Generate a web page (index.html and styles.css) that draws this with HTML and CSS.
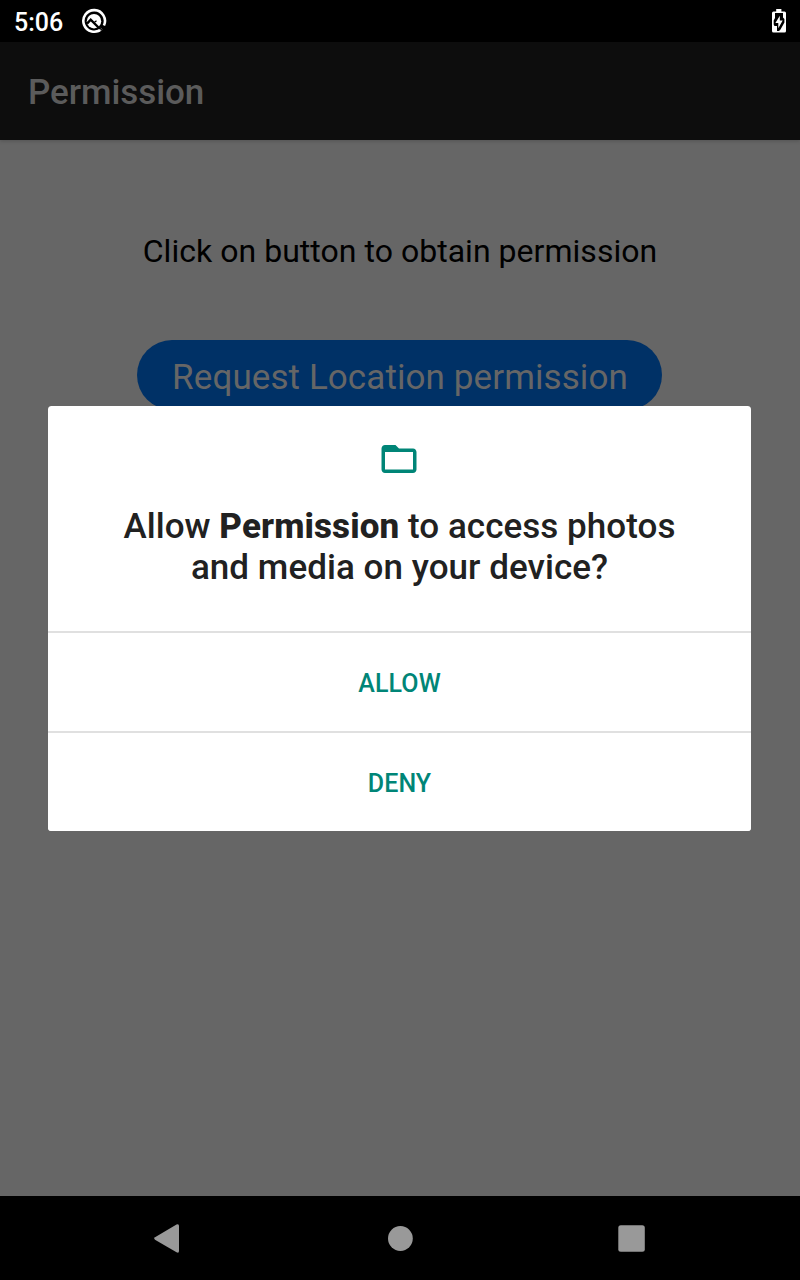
FILE: index.html
```html
<!DOCTYPE html>
<html lang="en">
<head>
<meta charset="utf-8">
<title>Permission</title>
<link rel="stylesheet" href="styles.css">
</head>
<body>
<div class="screen">
  <header class="status">
    <span class="time">5:06</span>
    <svg class="status-app" width="26" height="26" viewBox="0 0 26 26">
      <path d="M20 21.300A10.800 10.800 0 1 1 22.600 18.200" transform="rotate(-4 13 13)" fill="none" stroke="#fff" stroke-width="2.600"/>
      <circle cx="13" cy="13.200" r="7.200" fill="#fff"/>
      <path d="M6 15.600l3.700-3.900 10.800 10.800" fill="none" stroke="#000" stroke-width="2.400"/>
      <path d="M13.500 14.200l2-1.400" stroke="#000" stroke-width="1.400"/>
      <path d="M16.500 23.300l3-1.400" stroke="#fff" stroke-width="2"/>
    </svg>
    <svg class="battery" width="14" height="24" viewBox="0 0 14 24">
      <path d="M4.200 0h5.200v2.500h3.100Q14 2.500 14 4v18Q14 23.500 12.500 23.500h-11Q0 23.500 0 22V4Q0 2.500 1.500 2.500h2.700z" fill="#fff"/>
      <path d="M3 4H11V8.500L12.400 10V13.500L8.500 20.500L7 22H5V17H2.500L1.700 15.500V11.500L3 9z" fill="#000"/>
      <path d="M7.800 6.800L3.400 14H6.300V19.200L10.700 11.600H7.800z" fill="#fff"/>
    </svg>
  </header>
  <div class="appbar"><h1 class="title">Permission</h1></div>
  <main class="content">
    <p class="hint">Click on button to obtain permission</p>
    <button class="request">Request Location permission</button>
  </main>
  <nav class="nav">
    <svg class="nav-icons" width="800" height="84" viewBox="0 0 800 84" fill="#999">
      <path d="M155 41.300L176.500 28.600Q179 27.500 179 30V55Q179 57.500 176.500 56.200L155 43.700Q153.200 42.500 155 41.300z"/>
      <circle cx="400.400" cy="42.500" r="12.400"/>
      <rect x="618.300" y="29.300" width="26.500" height="26.500" rx="2.500"/>
    </svg>
  </nav>
  <section class="dialog" role="dialog">
    <div class="message">
      <svg class="folder" width="43" height="42" viewBox="0 0 24.570 24">
        <path d="M20 6h-8l-2-2H4c-1.100 0-1.990.900-1.990 2L2 18c0 1.100.900 2 2 2h16c1.100 0 2-.900 2-2V8c0-1.100-.900-2-2-2zm0 12H4V8h16v10z" fill="#008577"/>
      </svg>
      <p class="question">Allow <b>Permission</b> to access photos<br>and media on your device?</p>
    </div>
    <button class="choice">ALLOW</button>
    <button class="choice">DENY</button>
  </section>
</div>
</body>
</html>
```
FILE: styles.css
```css
* { box-sizing: border-box; }
body { margin: 0; font-family: Roboto, sans-serif; background: #666; }
.screen { position: relative; display: flex; flex-direction: column; height: 1280px; width: 800px; overflow: hidden; }
.status { display: flex; align-items: flex-start; height: 42px; padding: 8px 14px 0; background: #000; color: #fff; }
.time { font-size: 25px; font-weight: 500; line-height: 29px; width: 67px; }
.battery { margin: 1px 0 0 auto; }
.appbar { display: flex; align-items: center; height: 98px; padding: 2px 28px 0; background: #0d0d0d; box-shadow: 0 1px 4px rgba(0, 0, 0, .2); }
.title { margin: 0; font-size: 35px; font-weight: 500; letter-spacing: -.07px; color: #5b5b5b; }
.content { display: flex; flex: 1; flex-direction: column; align-items: center; padding-top: 91px; }
.hint { margin: 0 0 69px; font-size: 32px; line-height: 40px; letter-spacing: .03px; color: #000; }
.request { width: 525px; height: 70px; margin-right: 1px; padding: 4px 0 0 1px; border: 0; border-radius: 35px; background: #003166; color: #666; font: 400 35px Roboto, sans-serif; letter-spacing: .09px; }
.nav { height: 84px; background: #000; }
.nav-icons { display: block; }
.dialog { position: absolute; left: 48px; top: 406px; display: flex; flex-direction: column; width: 703px; height: 425px; border-radius: 3.5px; background: #fff; overflow: hidden; }
.message { display: flex; flex-direction: column; align-items: center; height: 225px; padding-top: 32px; }
.question { margin: 26px 0 0; font-size: 35px; font-weight: 500; line-height: 41px; letter-spacing: .04px; color: #212121; text-align: center; }
.question b { font-weight: 800; letter-spacing: .1px; }
.choice { height: 100px; padding: 3px 0 0; border: 0; border-top: 2px solid #e0e0e0; background: #fff; color: #008577; font: 500 25px Roboto, sans-serif; letter-spacing: .1px; }
```
